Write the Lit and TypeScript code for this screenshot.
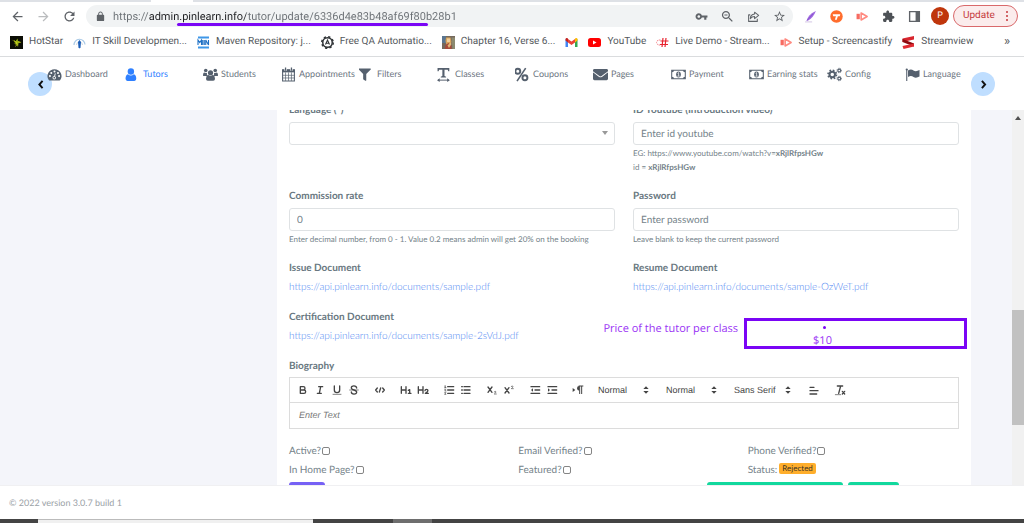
import { LitElement, html, svg, css } from "lit";
import { customElement, property } from "lit/decorators.js";

const G = "#5f6368";
const D = "#55606e";

const mat = (d: string, c = G) => svg`<path fill=${c} d=${d}></path>`;

/* Every glyph: [viewBox, drawing] */
const icons: Record<string, [string, unknown]> = {
  back: ["0 0 24 24", mat("M20 11H7.83l5.59-5.59L12 4l-8 8 8 8 1.41-1.41L7.83 13H20v-2z")],
  forward: ["0 0 24 24", mat("M12 4l-1.41 1.41L16.17 11H4v2h12.17l-5.58 5.59L12 20l8-8z", "#babcbe")],
  reload: ["0 0 24 24", mat("M17.65 6.35C16.2 4.9 14.21 4 12 4c-4.42 0-7.99 3.58-7.99 8s3.57 8 7.99 8c3.73 0 6.84-2.55 7.73-6h-2.08c-.82 2.33-3.04 4-5.65 4-3.31 0-6-2.69-6-6s2.69-6 6-6c1.66 0 3.14.69 4.22 1.78L13 11h7V4l-2.35 2.35z")],
  lock: ["0 0 24 24", mat("M18 8h-1V6c0-2.76-2.24-5-5-5S7 3.24 7 6v2H6c-1.1 0-2 .9-2 2v10c0 1.1.9 2 2 2h12c1.1 0 2-.9 2-2V10c0-1.1-.9-2-2-2zM9 6c0-1.66 1.34-3 3-3s3 1.34 3 3v2H9V6z")],
  key: ["0 0 24 24", mat("M12.65 10C11.83 7.67 9.61 6 7 6c-3.31 0-6 2.69-6 6s2.69 6 6 6c2.61 0 4.83-1.67 5.65-4H17v4h4v-4h2v-4H12.65zM7 14.5c-1.4 0-2.5-1.1-2.5-2.500s1.1-2.500 2.500-2.500 2.500 1.100 2.500 2.500-1.100 2.500-2.500 2.500z")],
  zoom: ["0 0 24 24", mat("M15.5 14h-.79l-.28-.27C15.41 12.59 16 11.11 16 9.5 16 5.91 13.09 3 9.500 3S3 5.910 3 9.500 5.910 16 9.500 16c1.610 0 3.090-.59 4.230-1.570l.27.28v.79l5 4.990L20.490 19l-4.990-5zm-6 0C7.010 14 5 11.990 5 9.500S7.010 5 9.500 5 14 7.010 14 9.500 11.990 14 9.500 14zM7 8.700h5v1.600H7z")],
  share: ["0 0 24 24", svg`<g fill="none" stroke=${G} stroke-width="1.9" stroke-linejoin="round"><path d="M6 9H3v12h16v-5"></path><path d="M14 4l7.500 6-7.500 6v-4c-4 0-6 1-8 4 .3-5 3-8 8-8.500z"></path></g>`],
  star: ["0 0 24 24", mat("M22 9.240l-7.190-.62L12 2 9.190 8.630 2 9.240l5.460 4.730L5.820 21 12 17.270 18.180 21l-1.630-7.030L22 9.240zM12 15.400l-3.760 2.270 1-4.280-3.320-2.880 4.380-.38L12 6.100l1.710 4.040 4.380.38-3.320 2.880 1 4.280L12 15.400z")],
  quill: ["0 0 24 24", svg`<path d="M22 2C15 5 8 10 5 19l2 1C14 16 19 10 22 2z" fill="#a06be0"></path><path d="M2 22h13" stroke="#c9b8de" stroke-width="1.500"></path><path d="M17 7L5 20" stroke="#7f49c8" stroke-width="1.200"></path>`],
  tee: ["0 0 24 24", svg`<circle cx="12" cy="12" r="11.500" fill="#ff6d2d"></circle><path d="M5 8h14l-1 3.500h-3.500L12.500 18H9l2-6.500H6z" fill="#fff"></path>`],
  cast: ["0 0 24 24", svg`<path d="M1 7h6v10H1z" fill="#f76b61"></path><path d="M9.500 5.500v13L20.500 12z" fill="none" stroke="#ff8a80" stroke-width="3" stroke-linejoin="round"></path>`],
  puzzle: ["0 0 24 24", mat("M20.500 11H19V7c0-1.100-.9-2-2-2h-4V3.500C13 2.120 11.880 1 10.500 1S8 2.120 8 3.500V5H4c-1.100 0-1.990.9-1.990 2v3.800H3.500c1.490 0 2.700 1.210 2.700 2.700s-1.210 2.700-2.700 2.700H2V20c0 1.100.9 2 2 2h3.800v-1.500c0-1.490 1.210-2.700 2.700-2.700 1.490 0 2.700 1.210 2.700 2.700V22H17c1.100 0 2-.9 2-2v-4h1.500c1.380 0 2.500-1.120 2.500-2.500S21.880 11 20.500 11z", "#4d5156")],
  panel: ["0 0 24 24", svg`<path d="M3 3h18v18H3z" fill="none" stroke="#5f6368" stroke-width="2.500"></path><path d="M14 3h7v18h-7z" fill="#5f6368"></path>`],

  hotstar: ["0 0 26 26", svg`<path d="M0 0h26v26H0z" fill="#0b0d05"></path><path d="M3 7l8 4 4-6 1 6 7 1-6 2-1 8-3-6-6-2 4-1z" fill="#9db512"></path><path d="M8 9l5 4-1 5M16 11l5 2M14 17l-3 4" stroke="#d9e021" stroke-width="1.500" fill="none"></path>`],
  itskill: ["0 0 26 26", svg`<path d="M2 18A11 11 0 0 1 24 17" fill="none" stroke="#a9c9e6" stroke-width="2.400"></path><path d="M7 18a6 6 0 0 1 12 0" fill="none" stroke="#cfd8e0" stroke-width="2"></path><path d="M13 8l3 4-1 11-2 2-2-2-1-11z" fill="#1d5fb8"></path>`],
  mvn: ["0 0 26 26", svg`<path d="M2 1h22v4H2zM2 21h22v4H2z" fill="#3f97e8"></path><path d="M2 18V8l3.500 5L9 8v10M11.500 8v10M14.500 8v10M17.500 18V8l5.500 10V8" fill="none" stroke="#1d6fc4" stroke-width="2.200"></path>`],
  qa: ["0 0 26 26", svg`<circle cx="13" cy="13" r="9.500" fill="none" stroke="#2f3336" stroke-width="3"></circle><circle cx="13" cy="13" r="11.500" fill="none" stroke="#2f3336" stroke-width="3" stroke-dasharray="4.500 4.530"></circle><path d="M9 17l4-9 4 9M10.500 14.500h5" fill="none" stroke="#2f3336" stroke-width="2.200"></path>`],
  chapter: ["0 0 26 26", svg`<path d="M0 0h26v26H0z" fill="#75695c"></path><path d="M0 0h8v14H0z" fill="#5b7690"></path><path d="M8 3h9l2 9-3 6H9L7 10z" fill="#d8a45c"></path><path d="M10 5h6v7h-6z" fill="#f0cf9b"></path><path d="M7 18l6-4 6 5v7H6z" fill="#a94a38"></path><path d="M19 3h7v23h-5z" fill="#8c8a70"></path><path d="M11 19l6-6 2 3-5 8z" fill="#e2b877"></path>`],
  gmail: ["0 0 26 20", svg`<path d="M1 3v16h5V9z" fill="#4285f4"></path><path d="M25 3v16h-5V9z" fill="#34a853"></path><path d="M6 3v7l7 5 7-5V3l-7 5z" fill="#ea4335"></path><path d="M1 3a3 3 0 0 1 5-1v8L1 6z" fill="#c5221f"></path><path d="M25 3a3 3 0 0 0-5-1v8l5-4z" fill="#fbbc04"></path>`],
  youtube: ["0 0 26 20", svg`<rect x="0" y="1" width="26" height="18" rx="5" fill="#f00"></rect><path d="M10 6v8l7-4z" fill="#fff"></path>`],
  live: ["0 0 26 26", svg`<path d="M9 8H4L1 13l3 5h5" fill="none" stroke="#f5868c" stroke-width="2" stroke-dasharray="3 1.500"></path><path d="M14 4l-2 18M20 4l-2 18M9 10h16M8 17h16" fill="none" stroke="#e8232f" stroke-width="2.400"></path>`],
  streamview: ["0 0 26 26", svg`<path d="M1 5l23-5v7L1 12z" fill="#d8262e"></path><path d="M1 6l23 9v6L1 12z" fill="#8e0b10"></path><path d="M1 20l23-5v6L3 26z" fill="#e02a31"></path>`],

  dashboard: ["0 0 28 26", svg`<path d="M14 3a13 13 0 0 0-11 20q.5 1 1.600 1h18.800q1.100 0 1.600-1A13 13 0 0 0 14 3z" fill=${D}></path><g fill="#fff"><circle cx="5.500" cy="16" r="1.900"></circle><circle cx="8" cy="10" r="1.900"></circle><circle cx="14" cy="7.500" r="1.900"></circle><circle cx="20.500" cy="10" r="1.900"></circle><circle cx="22.500" cy="16" r="1.900"></circle><circle cx="13.500" cy="19" r="3.200"></circle></g><path d="M13.500 19l2-8" stroke="#fff" stroke-width="1.700"></path><circle cx="13.500" cy="19" r="1.600" fill=${D}></circle>`],
  user: ["0 0 28 26", svg`<circle cx="11" cy="7.500" r="6" fill="#2f80ff"></circle><path d="M5.500 12.500Q11 17 16.500 12.500 21 14 21 21q0 4-3.500 4h-13Q1 25 1 21q0-7 4.500-8.500z" fill="#2f80ff"></path>`],
  users: ["0 0 30 26", svg`<g fill=${D}><circle cx="5.500" cy="5" r="3.600"></circle><circle cx="24.500" cy="5" r="3.600"></circle><path d="M0 15q0-6 3-6 3 2 5 .5-1 3.500 1 6.500H2q-2 0-2-1zM30 15q0-6-3-6-3 2-5 .5 1 3.500-1 6.500h7q2 0 2-1z"></path><circle cx="15" cy="9.500" r="5.200"></circle><path d="M10 13.500q5 4 10 0 4 1.500 4 8 0 4-3.500 4h-11Q6 25.500 6 21.500q0-6.500 4-8z"></path></g>`],
  calendar: ["0 0 28 28", svg`<path d="M3 5h22v21H3z" fill="none" stroke=${D} stroke-width="2"></path><path d="M2 5h24v5H2z" fill=${D}></path><path d="M8.500 10v16M14 10v16M19.500 10v16M3 15.500h22M3 20.500h22" stroke=${D} stroke-width="1.300"></path><path d="M8.500 1v6M19.500 1v6" stroke="#fff" stroke-width="4.500"></path><path d="M8.500 1v6M19.500 1v6" stroke=${D} stroke-width="2.400"></path>`],
  filter: ["20 -60 620 620", mat("M487.976 0H24.028C2.710 0-8.047 25.866 7.058 40.971L192 225.941V432c0 7.831 3.821 15.170 10.237 19.662l80 55.980C298.020 518.690 320 507.493 320 487.980V225.941l184.947-184.970C520.021 25.896 509.338 0 487.976 0z", D)],
  textw: ["2 0 26 28", svg`<path d="M2 2h22v6h-2l-1-3h-6v12l3 1v1.500H8V18l3-1V5H5L4 8H2z" fill=${D}></path><path d="M3 24.500h20" stroke=${D} stroke-width="1.800"></path><path d="M6 21v7l-5-3.500zM20 21v7l5-3.500z" fill=${D}></path>`],
  percent: ["2 0 26 26", svg`<g fill="none" stroke=${D} stroke-width="3.400"><circle cx="6.800" cy="7.500" r="4.300"></circle><circle cx="19.200" cy="18.500" r="4.300"></circle><path d="M20.500 2L5.500 24.500" stroke-width="2.800"></path></g>`],
  envelope: ["0 20 512 472", mat("M502.300 190.800c3.900-3.100 9.700-.2 9.700 4.700V400c0 26.500-21.500 48-48 48H48c-26.500 0-48-21.500-48-48V195.600c0-5 5.700-7.800 9.700-4.700 22.400 17.400 52.100 39.500 154.100 113.600 21.100 15.400 56.700 47.800 92.200 47.600 35.700.3 72-32.800 92.300-47.600 102-74.100 131.600-96.300 154-113.700zM256 320c23.200.4 56.600-29.200 73.400-41.400 132.700-96.300 142.800-104.700 173.400-128.700 5.800-4.500 9.200-11.500 9.200-18.900v-19c0-26.500-21.500-48-48-48H48c-26.500 0-48 21.500-48 48v19c0 7.400 3.400 14.300 9.200 18.900 30.600 23.900 40.700 32.400 173.400 128.700 16.800 12.200 50.200 41.800 73.400 41.400z", D)],
  money: ["0 0 32 26", svg`<path d="M1.500 4h29v18h-29z" fill="none" stroke=${D} stroke-width="2.200"></path><path d="M2 4h5q-1 4-5 4zM30 4h-5q1 4 5 4zM2 22h5q-1-4-5-4zM30 22h-5q1-4 5-4z" fill=${D}></path><ellipse cx="16" cy="13" rx="5" ry="6.500" fill=${D}></ellipse><path d="M14 10.500l2.300-1.500v7M13.500 16.500h5" fill="none" stroke="#fff" stroke-width="1.600"></path>`],
  cogs: ["0 0 30 28", svg`<g fill="none" stroke=${D}><circle cx="10.500" cy="14" r="5.500" stroke-width="4"></circle><circle cx="10.500" cy="14" r="8.500" stroke-width="3.200" stroke-dasharray="3.400 3.280"></circle><circle cx="24.500" cy="6" r="2.800" stroke-width="2.200"></circle><circle cx="24.500" cy="6" r="4.500" stroke-width="1.800" stroke-dasharray="1.800 1.730"></circle><circle cx="24.500" cy="22" r="2.800" stroke-width="2.200"></circle><circle cx="24.500" cy="22" r="4.500" stroke-width="1.800" stroke-dasharray="1.800 1.730"></circle></g>`],
  flag: ["0 0 30 26", svg`<path d="M3.500 2v24" stroke=${D} stroke-width="2.200"></path><circle cx="3.500" cy="3" r="2.200" fill=${D}></circle><path d="M6 5q6-4 11 0 5 3 12-1v13q-7 4-12 1-5-4-11 0z" fill=${D}></path>`],
  left: ["0 0 24 24", svg`<path d="M16.500 4L9.500 12l7 8" fill="none" stroke="#111" stroke-width="4.200"></path>`],
  right: ["0 0 24 24", svg`<path d="M8.500 4l7 8-7 8" fill="none" stroke="#111" stroke-width="4.200"></path>`],

  bold: ["0 0 18 18", svg`<path class="s" d="M5 4h4.500a2.500 2.500 0 0 1 0 5H5zM5 9h5.500a2.500 2.500 0 0 1 0 5H5z"></path>`],
  italic: ["0 0 18 18", svg`<path class="s" d="M7 4h6M5 14h6M8 14l2-10"></path>`],
  underline: ["0 0 18 18", svg`<path class="s" d="M5 3v6a4 4 0 0 0 8 0V3"></path><path class="t" d="M3 15.500h12"></path>`],
  strike: ["0 0 18 18", svg`<path class="t" d="M2.500 9h13"></path><path class="s" d="M13 6c-.5-4-8-4-8-.5 0 2 2 3 4 3.500s4 1.500 4 3.500c0 3.500-8 3.500-8-.5"></path>`],
  code: ["0 0 18 18", svg`<path class="s" d="M5 6L2.500 9 5 12M13 6l2.500 3-2.500 3M8 12l2-6"></path>`],
  h1: ["0 0 18 18", svg`<path class="s" d="M2 4v10M9 4v10M2 9h7M12.500 9.500l2-1V14M12.500 14h4"></path>`],
  h2: ["0 0 18 18", svg`<path class="s" d="M2 4v10M9 4v10M2 9h7M12 10q0-2 2.200-2t2.200 1.700Q16.500 11.500 12.500 14H17"></path>`],
  ordered: ["0 0 18 18", svg`<path class="s" d="M7 4h9M7 9h9M7 14h9"></path><path class="t" d="M2.500 5.500h2M3.500 5.500v-3l-1 .5M2.500 8h1.500v1l-1.500 1.500h2M2.500 13h2l-1 1 1 1.500h-2"></path>`],
  bullet: ["0 0 18 18", svg`<path class="s" d="M6 4h9M6 9h9M6 14h9M2.500 4h1M2.500 9h1M2.500 14h1"></path>`],
  sub: ["0 0 18 18", svg`<path class="s" d="M3 4.500l6 8M9 4.500l-6 8"></path><path class="t" d="M12.500 12q0-1 1.200-1 1.200 0 1.200 1T12.500 15h3"></path>`],
  sup: ["0 0 18 18", svg`<path class="s" d="M3 5.500l6 8M9 5.500l-6 8"></path><path class="t" d="M12.500 4q0-1 1.200-1 1.200 0 1.200 1T12.500 7h3"></path>`],
  outdent: ["0 0 18 18", svg`<path class="s" d="M3 14h13M3 4h13M9 9h7"></path><path d="M6 6.500v5L3 9z" fill="#444"></path>`],
  indent: ["0 0 18 18", svg`<path class="s" d="M3 14h13M3 4h13M9 9h7"></path><path d="M3 6.500v5L6 9z" fill="#444"></path>`],
  direction: ["0 0 18 18", svg`<path d="M1 6v6l4-3zM11 3a3.500 3.500 0 0 0 0 7z" fill="#444"></path><path d="M10 3h7M11.500 3v12M14.500 3v12" fill="none" stroke="#444" stroke-width="1.500"></path>`],
  updown: ["0 0 18 18", svg`<path d="M5 7.500h8L9 3.500zM5 10.500h8L9 14.500z" fill="#444"></path>`],
  align: ["0 0 18 18", svg`<path class="s" d="M3 10h12M3 15h10M3 5h6"></path>`],
  clean: ["0 0 18 18", svg`<path class="s" d="M5 3h8M7 14L10 3"></path><path class="t" d="M2 16h8"></path><path class="s" d="M12.500 11l3.500 4M16 11l-3.500 4"></path>`],
};

const glyph = (name: string) => {
  const [box, body] = icons[name];
  return html`<svg class="glyph" viewBox=${box} aria-hidden="true">${body}</svg>`;
};

const base = css`
  * { box-sizing: border-box; }
  :host { text-rendering: geometricPrecision; }
  input, select, textarea, button { text-rendering: inherit; }
  .glyph { display: block; width: 100%; height: 100%; }
  button { border: 0; padding: 0; margin: 0; background: none; font: inherit; color: inherit; }
  a { text-decoration: none; color: inherit; }
`;

@customElement("browser-chrome")
class BrowserChrome extends LitElement {
  static styles = [base, css`
    :host { display: block; background: #fff; font-family: Roboto, "Noto Sans", sans-serif; color: #54585c; }
    .tabs { display: flex; height: 2px; background: #dee1e6; }
    .tab { width: 42px; margin-left: 151px; background: #fff; }
    .bar { display: flex; align-items: center; height: 28px; padding: 0 6px 0 4px; }
    .tool { display: grid; place-items: center; flex: none; width: 26px; height: 22px; }
    .pic { width: 15px; height: 15px; }
    .pic.small { width: 13px; height: 13px; }
    .address { position: relative; display: flex; flex: 1; min-width: 0; height: 22px; margin: 0 4px; padding: 0 1px; border-radius: 11px; background: #f1f3f4; }
    .lock { display: grid; place-items: center; flex: none; width: 26px; }
    .lock .pic { width: 11px; height: 11px; }
    .url { flex: 1; min-width: 0; padding: 1px 0 0; border: 0; outline: 0; font: 11px/21px Roboto, "Noto Sans", sans-serif; color: transparent;
      background: linear-gradient(90deg, #6b7075 36px, #202124 36px, #202124 133px, #6b7075 133px); -webkit-background-clip: text; background-clip: text; }
    .mark { position: absolute; left: 91px; top: 18px; width: 251px; height: 3px; border-radius: 2px; background: #7a05f5; }
    .avatar { display: grid; place-items: center; width: 18px; height: 18px; border-radius: 50%; background: #bf360c; color: #fff; font-size: 9px; }
    .update { display: flex; align-items: center; justify-content: space-between; height: 22px; width: 65px; padding: 0 9px; border: 1px solid #d9696b; border-radius: 11px; background: #fbecec; color: #c5393c; font-size: 10px; line-height: 14px; }
    .dots { display: grid; gap: 2px; }
    .dot { width: 2px; height: 2px; background: #c5393c; border-radius: 50%; }
    .marks { display: flex; align-items: center; gap: 10px; height: 27px; padding: 0 14px 2px 10px; border-bottom: 1px solid #dadcde; font-size: 10px; line-height: 14px; white-space: nowrap; }
    .bookmark { display: flex; align-items: center; gap: 6px; }
    .fav { width: 13px; height: 13px; flex: none; }
    .more { margin-left: auto; font-size: 13px; }
  `];

  render() {
    const marks: [string, string][] = [
      ["hotstar", "HotStar"], ["itskill", "IT Skill Developmen..."], ["mvn", "Maven Repository: j..."],
      ["qa", "Free QA Automatio..."], ["chapter", "Chapter 16, Verse 6..."], ["gmail", ""], ["youtube", "YouTube"],
      ["live", "Live Demo - Stream..."], ["cast", "Setup - Screencastify"], ["streamview", "Streamview"],
    ];
    const tool = (n: string, label: string, small = false) =>
      html`<button class="tool" aria-label=${label}><span class="pic ${small ? "small" : ""}">${glyph(n)}</span></button>`;
    return html`
      <div class="tabs"><div class="tab"></div></div>
      <div class="bar">
        ${tool("back", "Back")}${tool("forward", "Forward")}${tool("reload", "Reload")}
        <div class="address">
          <span class="lock"><span class="pic">${glyph("lock")}</span></span>
          <input class="url" aria-label="Address" value="https://admin.pinlearn.info/tutor/update/6336d4e83b48af69f80b28b1" />
          <span class="mark"></span>
          ${tool("key", "Passwords", true)}${tool("zoom", "Zoom")}${tool("share", "Share", true)}${tool("star", "Bookmark", true)}
        </div>
        ${tool("quill", "Notes", true)}${tool("tee", "Tango", true)}${tool("cast", "Screencastify", true)}${tool("puzzle", "Extensions", true)}${tool("panel", "Side panel", true)}
        <button class="tool" aria-label="Profile"><span class="avatar">P</span></button>
        <button class="update">Update<span class="dots"><span class="dot"></span><span class="dot"></span><span class="dot"></span></span></button>
      </div>
      <nav class="marks">
        ${marks.map(([i, t]) => html`<a class="bookmark" href="#" aria-label=${t || "Gmail"}><span class="fav">${glyph(i)}</span>${t}</a>`)}
        <span class="more">»</span>
      </nav>`;
  }
}

@customElement("site-nav")
class SiteNav extends LitElement {
  static styles = [base, css`
    :host { display: block; position: relative; background: #fff; height: 53px; font: 9px/14px Lato, sans-serif; color: #6c757f; }
    .items { position: relative; z-index: 1; pointer-events: none; display: grid; grid-template-columns: repeat(12, 1fr); padding: 10px 41px 0 47px; }
    .item { display: flex; white-space: nowrap; gap: 3px; }
    .item.on { color: #2f80ff; }
    .pic { width: 15px; height: 15px; flex: none; }
    .arrow { position: absolute; top: 15px; width: 24px; height: 24px; border-radius: 50%; background: #bfdeff; display: grid; place-items: center; }
    .arrow .pic { width: 11px; height: 11px; }
    .prev { left: 28px; }
    .next { right: 29px; }
  `];
  render() {
    const items: [string, string][] = [
      ["dashboard", "Dashboard"], ["user", "Tutors"], ["users", "Students"], ["calendar", "Appointments"],
      ["filter", "Filters"], ["textw", "Classes"], ["percent", "Coupons"], ["envelope", "Pages"],
      ["money", "Payment"], ["money", "Earning stats"], ["cogs", "Config"], ["flag", "Language"],
    ];
    return html`
      <button class="arrow prev" aria-label="Previous"><span class="pic">${glyph("left")}</span></button>
      <nav class="items">
        ${items.map(([i, t]) => html`<a class="item ${t === "Tutors" ? "on" : ""}" href="#"><span class="pic">${glyph(i)}</span>${t}</a>`)}
      </nav>
      <button class="arrow next" aria-label="Next"><span class="pic">${glyph("right")}</span></button>`;
  }
}

@customElement("rich-editor")
class RichEditor extends LitElement {
  @property() placeholder = "";
  static styles = [base, css`
    :host { display: block; border: 1px solid #dcdcdc; }
    .bar { display: flex; align-items: center; gap: 9px; height: 25px; padding: 0 4px; border-bottom: 1px solid #dcdcdc; }
    .group { display: flex; }
    .tool { display: grid; place-items: center; width: 17px; height: 17px; }
    .pic { width: 12px; height: 12px; }
    .s { fill: none; stroke: #444; stroke-width: 2; stroke-linecap: round; stroke-linejoin: round; }
    .t { fill: none; stroke: #444; stroke-width: 1; stroke-linecap: round; stroke-linejoin: round; }
    .pick { position: relative; display: flex; align-items: center; width: 59px; }
    .pick.wide { width: 65px; }
    .select { appearance: none; width: 100%; margin: 0; padding: 0 0 0 3px; border: 0; background: none; color: #444; font: 9px/14px "Liberation Sans", Arial, sans-serif; }
    .caret { position: absolute; right: 2px; top: 1px; width: 12px; height: 12px; pointer-events: none; }
    .text { display: block; width: 100%; height: 25px; padding: 5px 9px; border: 0; outline: 0; resize: none; overflow: hidden; background: none; font: italic 9px/14px "Liberation Sans", Arial, sans-serif; }
    .text::placeholder { color: #777; opacity: 1; }
  `];
  render() {
    const groups = [["bold", "italic", "underline", "strike"], ["code"], ["h1", "h2"], ["ordered", "bullet"], ["sub", "sup"], ["outdent", "indent"], ["direction"]];
    const tool = (n: string) => html`<button class="tool" aria-label=${n}><span class="pic">${glyph(n)}</span></button>`;
    const pick = (label: string, value: string, wide = false) => html`
      <label class="pick ${wide ? "wide" : ""}"><select class="select" aria-label=${label}><option>${value}</option></select><span class="caret">${glyph("updown")}</span></label>`;
    return html`
      <div class="bar">
        ${groups.map((g) => html`<span class="group">${g.map(tool)}</span>`)}
        ${pick("Size", "Normal")}${pick("Heading", "Normal")}${pick("Font", "Sans Serif", true)}
        <span class="group">${tool("align")}</span><span class="group">${tool("clean")}</span>
      </div>
      <textarea class="text" aria-label="Biography" placeholder=${this.placeholder}></textarea>`;
  }
}

@customElement("tutor-form")
class TutorForm extends LitElement {
  static styles = [base, css`
    :host { display: block; background: #fff; padding: 0 12px; font: 10px/14px Lato, sans-serif; color: #75838a; }
    .form { display: grid; gap: 14px; margin-top: -8px; }
    .row { position: relative; display: grid; grid-template-columns: 1fr 1fr; gap: 18px; }
    .name { display: block; padding-top: 1px; font-weight: 700; margin-bottom: 5px; color: #697881; }
    .name.tight { margin-bottom: 4px; }
    .box { display: block; width: 100%; height: 23px; margin: 0 0 1px; padding: 0 7px; border: 1px solid #dfe2e4; border-radius: 3px; outline: 0; background: #fff; color: #75838a; font: 10px/14px Lato, sans-serif; }
    .box::placeholder { color: #75838a; opacity: 1; }
    .drop { position: relative; display: block; }
    .drop .box { appearance: none; }
    .tri { position: absolute; right: 7px; top: 9px; border: 3px solid transparent; border-top: 4px solid #999; border-bottom: 0; }
    .hint { display: block; font-size: 8px; }
    .link { display: block; font-weight: 300; line-height: 15px; color: #4d86f2; }
    .note { position: absolute; right: -8px; top: 9px; display: flex; gap: 6px; color: #9a33f5; font: 11px/21px "Open Sans", sans-serif; white-space: nowrap; }
    .price { width: 223px; height: 31px; border: 3px solid #7a05f5; display: grid; justify-items: center; align-content: end; padding: 0 66px 0 0; line-height: 10px; }
    .bullet { width: 3px; height: 3px; border-radius: 50%; background: #7a05f5; margin: 0 0 7px 4px; }
    .checks { display: grid; grid-template-columns: repeat(3, 1fr); column-gap: 18px; margin-top: -1px; line-height: 19px; }
    .check { display: flex; align-items: center; gap: 1px; }
    .tick { appearance: none; width: 8px; height: 8px; margin: 0 0 2px; border: 1px solid #858585; border-radius: 2px; background: #fff; }
    .badge { height: 11px; margin: 0 0 4px 1px; padding: 0 3px; border-radius: 2px; background: #ffae2b; color: #3b3322; font-size: 8px; line-height: 11px; }
    .actions { display: flex; gap: 5px; margin-top: -12px; padding-right: 60px; }
    .btn { height: 23px; border-radius: 3px; background: #12d89d; }
    .save { width: 36px; margin-right: auto; background: #7661f5; }
    .approve { width: 136px; }
    .reject { width: 51px; }
  `];
  render() {
    const check = (t: string) => html`<label class="check">${t}<input class="tick" type="checkbox" /></label>`;
    return html`
      <form class="form">
        <div class="row">
          <div>
            <label class="name" for="lang">Language (*)</label>
            <span class="drop"><select class="box" id="lang"><option></option></select><span class="tri"></span></span>
          </div>
          <div>
            <label class="name" for="yt">ID Youtube (Introduction video)</label>
            <input class="box" id="yt" placeholder="Enter id youtube" />
            <span class="hint">EG: https://www.youtube.com/watch?v=<b>xRjlRfpsHGw</b></span>
            <span class="hint">id = <b>xRjlRfpsHGw</b></span>
          </div>
        </div>
        <div class="row">
          <div>
            <label class="name" for="rate">Commission rate</label>
            <input class="box" id="rate" value="0" />
            <span class="hint">Enter decimal number, from 0 - 1. Value 0.2 means admin will get 20% on the booking</span>
          </div>
          <div>
            <label class="name" for="pw">Password</label>
            <input class="box" id="pw" type="password" placeholder="Enter password" />
            <span class="hint">Leave blank to keep the current password</span>
          </div>
        </div>
        <div class="row">
          <div><span class="name">Issue Document</span><a class="link" href="#">https://api.pinlearn.info/documents/sample.pdf</a></div>
          <div><span class="name">Resume Document</span><a class="link" href="#">https://api.pinlearn.info/documents/sample-OzWeT.pdf</a></div>
        </div>
        <div class="row">
          <div><span class="name">Certification Document</span><a class="link" href="#">https://api.pinlearn.info/documents/sample-2sVdJ.pdf</a></div>
          <div class="note">Price of the tutor per class<div class="price"><span class="bullet"></span>$10</div></div>
        </div>
        <div>
          <span class="name tight">Biography</span>
          <rich-editor placeholder="Enter Text"></rich-editor>
        </div>
        <div class="checks">
          ${check("Active?")}${check("Email Verified?")}${check("Phone Verified?")}${check("In Home Page?")}${check("Featured?")}
          <span class="check">Status: <span class="badge">Rejected</span></span>
        </div>
        <div class="actions">
          <button type="button" class="btn save" aria-label="Update"></button>
          <button type="button" class="btn approve" aria-label="Approve"></button>
          <button type="button" class="btn reject" aria-label="Back"></button>
        </div>
      </form>`;
  }
}

@customElement("app-root")
class AppRoot extends LitElement {
  static styles = [base, css`
    :host { display: flex; flex-direction: column; height: 100vh; overflow: hidden; background: #fff; }
    .main { flex: 1; min-height: 0; display: grid; grid-template-columns: 277px 1fr 41px 12px; grid-template-rows: 100%; background: #f4f5fa; }
    .card { grid-column: 2; overflow: hidden; }
    .scroll { grid-column: 4; display: flex; flex-direction: column; background: #f1f1f1; }
    .up { align-self: center; margin-top: 6px; border: 3px solid transparent; border-bottom: 4px solid #505050; border-top: 0; }
    .space { flex: 190; }
    .thumb { flex: 115; background: #c1c1c1; }
    .rest { flex: 60; }
    .foot { flex: none; height: 34px; padding-left: 9px; border-top: 1px solid #f0f0f2; font: 9px/34px Lato, sans-serif; color: #9aa1a6; }
    .task { flex: none; display: flex; height: 4px; background: #444; }
    .search { width: 275px; margin-left: 38px; background: #f0f0f0; border-top: 1px solid #bbb; }
    .active { width: 39px; margin-left: 80px; background: #6e6e6e; }
  `];
  render() {
    return html`
      <browser-chrome></browser-chrome>
      <site-nav></site-nav>
      <main class="main">
        <tutor-form class="card"></tutor-form>
        <div class="scroll"><span class="up"></span><span class="space"></span><span class="thumb"></span><span class="rest"></span></div>
      </main>
      <footer class="foot">© 2022 version 3.0.7 build 1</footer>
      <div class="task"><span class="search"></span><span class="active"></span></div>`;
  }
}
